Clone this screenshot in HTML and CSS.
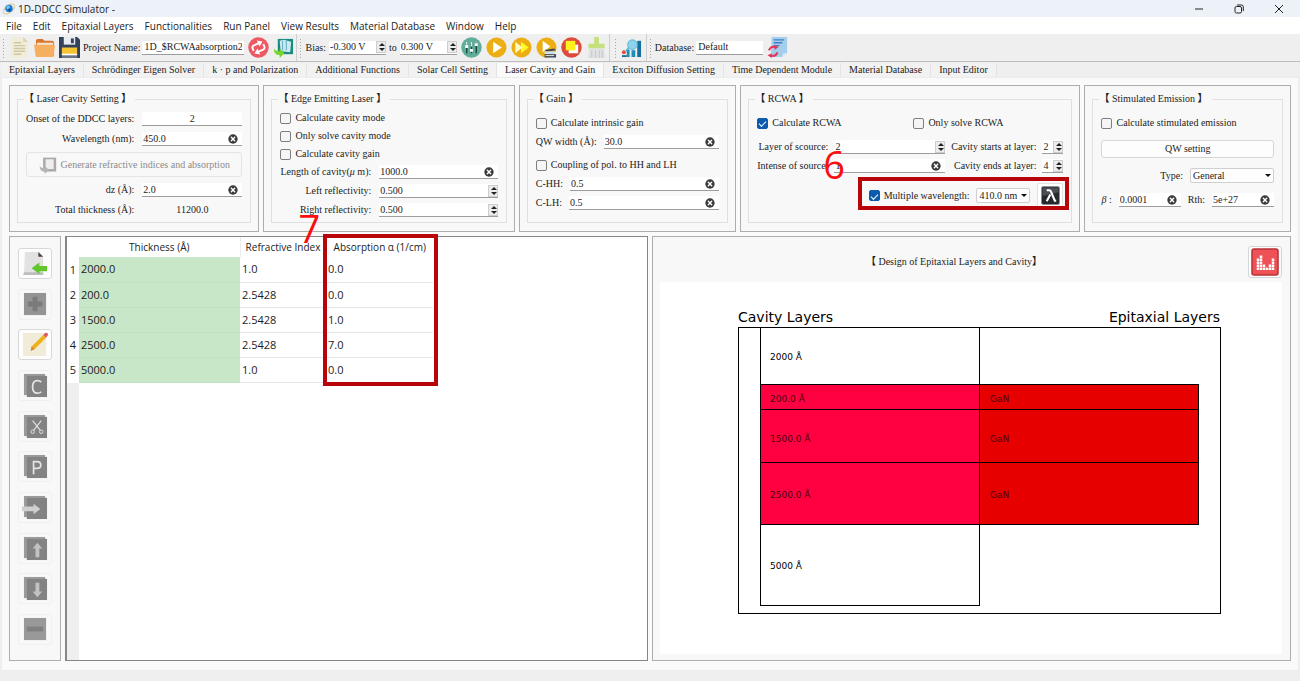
FILE: index.html
```html
<!DOCTYPE html>
<html lang="en">
<head>
<meta charset="utf-8">
<meta name="viewport" content="width=device-width, initial-scale=1">
<title>1D-DDCC Simulator</title>
<link rel="stylesheet" href="styles.css">
</head>
<body>
<svg class="defs" aria-hidden="true">
  <symbol id="clear" viewBox="0 0 12 12"><circle cx="6" cy="6" r="5.6" fill="#3a3a3a"/><path d="M4 4l4 4M8 4l-4 4" stroke="#fff" stroke-width="1.7" stroke-linecap="round"/></symbol>
  <symbol id="stack" viewBox="0 0 26 26"><path d="M1 1h22v22H1z" fill="#9b9b9b"/><path d="M4 3h21v22H4z" fill="#838383"/></symbol>
  <symbol id="play" viewBox="0 0 22 22"><circle cx="11" cy="11" r="10.500" fill="#ecae12"/><path d="M7.500 5l9 6-9 6z" fill="#fff"/></symbol>
</svg>

<header class="titlebar">
  <svg class="app-icon" viewBox="0 0 16 16"><ellipse cx="8" cy="8" rx="7.600" ry="4" fill="none" stroke="#e0cf94" stroke-width="1.300" transform="rotate(-38 8 8)"/><circle cx="8" cy="7.500" r="4.300" fill="#1d7fd6"/><path d="M5 5c2-2 4-1 4 1s-3 3-4 1z" fill="#7cc4f5"/><circle cx="8.500" cy="9" r="1.500" fill="#0b4a9c"/></svg>
  <h1>1D-DDCC Simulator -</h1>
  <div class="window-controls">
    <button aria-label="Minimize"><svg viewBox="0 0 12 12"><path d="M2 6h8"/></svg></button>
    <button aria-label="Restore"><svg viewBox="0 0 12 12"><rect x="2" y="3.500" width="6.500" height="6.500" rx="1.500"/><path d="M4 2h4.500a1.800 1.800 0 0 1 1.800 1.800V8"/></svg></button>
    <button aria-label="Close"><svg viewBox="0 0 12 12"><path d="M2 2l8 8M10 2l-8 8"/></svg></button>
  </div>
</header>

<nav class="menubar">
  <a href="#">File</a><a href="#">Edit</a><a href="#">Epitaxial Layers</a><a href="#">Functionalities</a><a href="#">Run Panel</a><a href="#">View Results</a><a href="#">Material Database</a><a href="#">Window</a><a href="#">Help</a>
</nav>

<div class="toolbar">
  <div class="toolgroup files">
    <button aria-label="New"><svg viewBox="0 0 22 22"><path d="M2 0h13l5 5v17H2z" fill="#f1edda"/><path d="M15 0v5h5z" fill="#d9d3b4"/><path d="M5 6h8M5 9h12M5 12h12M5 15h12M5 18h8" stroke="#cfc8a2" stroke-width="1.500"/></svg></button>
    <button aria-label="Open"><svg viewBox="0 0 22 22"><path d="M2 4q0-2 2-2h5l2 2h8q2 0 2 2v14H2z" fill="#d9762c"/><path d="M3 6h17v4H3z" fill="#f3e3cf"/><path d="M0 8h20q2 0 1.800 2L20.500 21H2z" fill="#f6ae60"/></svg></button>
    <button aria-label="Save"><svg viewBox="0 0 22 22"><path d="M0 0h19l3 3v19H0z" fill="#33425a"/><path d="M5 0h12v8H5z" fill="#e8ebef"/><path d="M12.500 1.500h3v5h-3z" fill="#33425a"/><path d="M3 11h16v8H3z" fill="#f6c432"/><path d="M3 17.500h16v2H3z" fill="#fff"/><path d="M3 19.500h16V22H3z" fill="#6b7484"/></svg></button>
    <label for="project">Project Name:</label>
    <input class="line project" id="project" value="1D_$RCWAabsorption2">
    <button aria-label="Reload project"><svg viewBox="0 0 22 22"><circle cx="11" cy="11" r="10.700" fill="#ee5a63"/><path d="M5 12V9.500Q5 7 7.500 7h6M17 10v2.500Q17 15 14.500 15h-6" fill="none" stroke="#fff" stroke-width="2" transform="rotate(-25 11 11)"/><path d="M12.500 3.500l5 3.500-5 3.500zM9.500 11.500l-5 3.500 5 3.500z" fill="#fff" transform="rotate(-25 11 11)"/></svg></button>
    <button aria-label="Import project"><svg viewBox="0 0 22 22"><path d="M5 2h16v16H5z" fill="#178c7c"/><path d="M7 4l4-1 8 2-1 11-10-1z" fill="#cdeaf2"/><path d="M10 4v10M14 4v10" stroke="#6ab2c4" stroke-width="1.200"/><path d="M1 11q0 4 6 4v-3l5 5-5 5v-3Q0 19 1 11z" fill="#79d62e"/></svg></button>
  </div>
  <div class="toolgroup run">
    <label for="bias-from">Bias:</label>
    <span class="field volt"><input id="bias-from" value="-0.300 V"><span class="spin"><button aria-label="Up"></button><button aria-label="Down"></button></span></span>
    <label for="bias-to">to</label>
    <span class="field volt"><input id="bias-to" value="0.300 V"><span class="spin"><button aria-label="Up"></button><button aria-label="Down"></button></span></span>
    <button aria-label="Parameters"><svg viewBox="0 0 22 22"><circle cx="11" cy="11" r="10.700" fill="#5fae9c"/><path d="M6 5v12M11 5v12M16 5v12" stroke="#22463f" stroke-width="1.500"/><path d="M4.500 10h3M9.500 14h3M14.500 8h3" stroke="#fff" stroke-width="3"/><path d="M6 5v3M11 5v5M16 5v1" stroke="#d8efe9" stroke-width="1.500"/></svg></button>
    <button aria-label="Run"><svg><use href="#play"/></svg></button>
    <button aria-label="Run all"><svg viewBox="0 0 22 22"><circle cx="11" cy="11" r="10.500" fill="#ecae12"/><path d="M10.500 5l8 6-8 6z" fill="#fffb28"/><path d="M4.500 5l7.500 6-7.500 6z" fill="#fffbc0"/></svg></button>
    <button aria-label="Run in background"><svg viewBox="0 0 22 22"><circle cx="11" cy="11" r="10.500" fill="#ecae12"/><path d="M7 4l8 6-8 6z" fill="#fff"/><path d="M9 13.500l10-1.500 2 2-10 1.500z" fill="#3b4654"/><path d="M9 15h11v3H9z" fill="#cfe0ea"/><path d="M9 18h12v3.500H9z" fill="#3b4654"/><path d="M10 19.500h9" stroke="#eee"/></svg></button>
    <button aria-label="Stop"><svg viewBox="0 0 22 22"><circle cx="11" cy="11" r="10.700" fill="#dc4b3e"/><path d="M8 8h10v9H8z" fill="#fff"/><path d="M5 4h10v10H5z" fill="#fff21c"/></svg></button>
    <button aria-label="Clean"><svg viewBox="0 0 22 22"><path d="M8.500 0h5v7h6v5h-17V7h6z" fill="#c6e07f"/><path d="M3.500 12h15.500l1 10H2z" fill="#dfe2e4"/><path d="M6 14v8M10 14v8M14 14v8M17 14v8" stroke="#c2c6ca"/></svg></button>
  </div>
  <div class="toolgroup plot">
    <button aria-label="Plot"><svg viewBox="0 0 22 22"><path d="M6 13h3v8H6zM11 14h4v7h-4z" fill="#1d8fb8"/><path d="M17 4h4v17h-4z" fill="#176f9c"/><circle cx="12" cy="8" r="5" fill="#8ed4ee" stroke="#52b2d8"/><path d="M8 11l-3 4" stroke="#52b2d8" stroke-width="1.500"/><circle cx="3" cy="16" r="2" fill="#e04b3a"/><path d="M1 19h5v2H1z" fill="#176f9c"/></svg></button>
  </div>
  <div class="toolgroup database">
    <label for="database">Database:</label>
    <input class="line db" id="database" value="Default">
    <button aria-label="Reload database"><svg viewBox="0 0 22 22"><path d="M5 0h16v17l-5 4H4z" fill="#a5cdec"/><path d="M16 21l1-4h4z" fill="#dcecf8"/><path d="M7 3h11M7 6h9M7 9h6" stroke="#3f81c2" stroke-width="1.500"/><path d="M2 14q2-5 7-3.500M11 16q-2 5-7 3.500" fill="none" stroke="#e2365a" stroke-width="2"/><path d="M8 8l4 2.500-4 3zM5 17l-4.500 2 4.500 3z" fill="#e2365a"/></svg></button>
  </div>
</div>

<div class="tabs" role="tablist">
  <button role="tab">Epitaxial Layers</button><button role="tab">Schrödinger Eigen Solver</button><button role="tab">k · p and Polarization</button><button role="tab">Additional Functions</button><button role="tab">Solar Cell Setting</button><button role="tab" aria-selected="true">Laser Cavity and Gain</button><button role="tab">Exciton Diffusion Setting</button><button role="tab">Time Dependent Module</button><button role="tab">Material Database</button><button role="tab">Input Editor</button>
</div>

<main class="page">
  <div class="settings">
    <section class="panel">
      <fieldset>
        <legend><b>【</b> Laser Cavity Setting <b>】</b></legend>
        <div class="form tight">
          <label for="onset">Onset of the DDCC layers:</label>
          <input class="line centered" id="onset" value="2">
          <label for="wave">Wavelength (nm):</label>
          <span class="field"><input id="wave" value="450.0"><button class="clear" aria-label="Clear"><svg><use href="#clear"/></svg></button></span>
          <button class="generate" disabled><svg viewBox="0 0 22 22"><path d="M5 2h16v17H5z" fill="#a9a9a9"/><path d="M8 4h10v12H8z" fill="#ededed"/><path d="M1 11q0 4 6 4v-3l5 5-5 5v-3Q0 19 1 11z" fill="#b4b4b4"/></svg>Generate refractive indices and absorption</button>
          <label for="dz">dz (Å):</label>
          <span class="field"><input id="dz" value="2.0"><button class="clear" aria-label="Clear"><svg><use href="#clear"/></svg></button></span>
          <span>Total thickness (Å):</span>
          <output>11200.0</output>
        </div>
      </fieldset>
    </section>

    <section class="panel">
      <fieldset>
        <legend><b>【</b> Edge Emitting Laser <b>】</b></legend>
        <div class="stack laser">
          <label class="check"><input type="checkbox">Calculate cavity mode</label>
          <label class="check"><input type="checkbox">Only solve cavity mode</label>
          <label class="check"><input type="checkbox">Calculate cavity gain</label>
          <div class="form">
            <label for="length">Length of cavity(<i>μ</i> m):</label>
            <span class="field"><input id="length" value="1000.0"><button class="clear" aria-label="Clear"><svg><use href="#clear"/></svg></button></span>
            <label for="left">Left reflectivity:</label>
            <span class="field"><input id="left" value="0.500"><span class="spin"><button aria-label="Up"></button><button aria-label="Down"></button></span></span>
            <label for="right">Right reflectivity:</label>
            <span class="field"><input id="right" value="0.500"><span class="spin"><button aria-label="Up"></button><button aria-label="Down"></button></span></span>
          </div>
        </div>
      </fieldset>
      <span class="step step-seven">7</span>
    </section>

    <section class="panel">
      <fieldset>
        <legend><b>【</b> Gain <b>】</b></legend>
        <div class="stack">
          <label class="check"><input type="checkbox">Calculate intrinsic gain</label>
          <div class="row"><label for="qw">QW width (Å):</label><span class="field"><input id="qw" value="30.0"><button class="clear" aria-label="Clear"><svg><use href="#clear"/></svg></button></span></div>
          <label class="check spaced"><input type="checkbox">Coupling of pol. to HH and LH</label>
          <div class="row"><label for="chh">C-HH:</label><span class="field"><input id="chh" value="0.5"><button class="clear" aria-label="Clear"><svg><use href="#clear"/></svg></button></span></div>
          <div class="row"><label for="clh">C-LH:</label><span class="field"><input id="clh" value="0.5"><button class="clear" aria-label="Clear"><svg><use href="#clear"/></svg></button></span></div>
        </div>
      </fieldset>
    </section>

    <section class="panel">
      <fieldset>
        <legend><b>【</b> RCWA <b>】</b></legend>
        <div class="stack rcwa">
          <div class="checks">
            <label class="check"><input type="checkbox" checked>Calculate RCWA</label>
            <label class="check"><input type="checkbox">Only solve RCWA</label>
          </div>
          <div class="form four">
            <label for="layer">Layer of scource:</label>
            <span class="field"><input id="layer" value="2"><span class="spin"><button aria-label="Up"></button><button aria-label="Down"></button></span></span>
            <label for="starts">Cavity starts at layer:</label>
            <span class="field"><input id="starts" value="2"><span class="spin"><button aria-label="Up"></button><button aria-label="Down"></button></span></span>
            <label for="intense">Intense of source:</label>
            <span class="field"><input id="intense" value="1"><button class="clear" aria-label="Clear"><svg><use href="#clear"/></svg></button></span>
            <label for="ends">Cavity ends at layer:</label>
            <span class="field"><input id="ends" value="4"><span class="spin"><button aria-label="Up"></button><button aria-label="Down"></button></span></span>
          </div>
          <div class="multi">
            <label class="check"><input type="checkbox" checked>Multiple wavelength:</label>
            <span class="select"><select aria-label="Wavelength"><option>410.0 nm</option></select></span>
            <button class="lambda" aria-label="Edit wavelengths"><svg viewBox="0 0 20 20"><rect x=".5" y=".5" width="19" height="19" rx="2" fill="#26292e" stroke="#8d9196"/><path d="M1.500 1.500h17v5l-17 4z" fill="#4a4e55"/><path d="M6 4.500h2.500q1.500 0 2 1.500l4 9.500h1.500M9.800 9L6 16" fill="none" stroke="#fff" stroke-width="2.200"/></svg></button>
            <span class="mark mark-multi"></span>
          </div>
        </div>
      </fieldset>
      <span class="step step-six">6</span>
    </section>

    <section class="panel">
      <fieldset>
        <legend><b>【</b> Stimulated Emission <b>】</b></legend>
        <div class="stack emission">
          <label class="check"><input type="checkbox">Calculate stimulated emission</label>
          <button class="plain">QW setting</button>
          <div class="row end"><label for="type">Type:</label><span class="select wide"><select id="type"><option>General</option></select></span></div>
          <div class="row">
            <label for="beta"><i>β</i> :</label><span class="field"><input id="beta" value="0.0001"><button class="clear" aria-label="Clear"><svg><use href="#clear"/></svg></button></span>
            <label for="rth">Rth:</label><span class="field"><input id="rth" value="5e+27"><button class="clear" aria-label="Clear"><svg><use href="#clear"/></svg></button></span>
          </div>
        </div>
      </fieldset>
    </section>
  </div>

  <div class="workspace">
    <div class="panel sidebar">
      <button class="on" aria-label="Load layers"><svg viewBox="0 0 26 26"><path d="M2 1h14l5 5v19H1z" fill="#e2e2e2"/><path d="M1 22h20v3H0z" fill="#bdbdbd"/><path d="M16 1v5h5z" fill="#444"/><path d="M9 18l8-6v3.500h8v5.500h-8V24z" fill="#62c52a"/></svg></button>
      <button aria-label="Add"><svg viewBox="0 0 26 26"><path d="M1 1h23v23H1z" fill="#949494"/><path d="M10 5h5v5h5v5h-5v5h-5v-5H5v-5h5z" fill="#7b7b7b"/></svg></button>
      <button class="on" aria-label="Edit"><svg viewBox="0 0 26 26"><path d="M0 1h24v24H0z" fill="#f1ecd8"/><path d="M9 15L21 3l3 3-12 12-4 1.500z" fill="#eeb21d"/><path d="M21 3l2-2q3-1 3 2l-2 3z" fill="#d95b5b"/><path d="M9 15l3 3-4 1.500z" fill="#c98a40"/></svg></button>
      <button aria-label="Copy"><svg viewBox="0 0 26 26"><use href="#stack"/><path d="M19 9.500q-1.500-1.500-4-1.500-5 0-5 6.500t5 6.500q2.500 0 4-1.500" fill="none" stroke="#e4e4e4" stroke-width="1.800"/></svg></button>
      <button aria-label="Cut"><svg viewBox="0 0 26 26"><use href="#stack"/><path d="M10 7l8 10M19 7l-8 10" stroke="#ddd" stroke-width="1.300"/><circle cx="10" cy="18.500" r="1.800" fill="none" stroke="#ddd"/><circle cx="19" cy="18.500" r="1.800" fill="none" stroke="#ddd"/></svg></button>
      <button aria-label="Paste"><svg viewBox="0 0 26 26"><use href="#stack"/><path d="M11 21V8h3.500q4 0 4 3.500t-4 3.500H11" fill="none" stroke="#e4e4e4" stroke-width="1.800"/></svg></button>
      <button aria-label="Insert"><svg viewBox="0 0 26 26"><use href="#stack"/><path d="M-1 12h12V9l7 5.500-7 5.500v-3H-1z" fill="#cfcfcf"/></svg></button>
      <button aria-label="Move up"><svg viewBox="0 0 26 26"><use href="#stack"/><path d="M15 7l5 6h-3v9h-4v-9h-3z" fill="#c2c2c2"/></svg></button>
      <button aria-label="Move down"><svg viewBox="0 0 26 26"><use href="#stack"/><path d="M15 22l5-6h-3V7h-4v9h-3z" fill="#c2c2c2"/></svg></button>
      <button aria-label="Remove"><svg viewBox="0 0 26 26"><path d="M1 1h23v23H1z" fill="#999"/><path d="M4 10h17v5H4z" fill="#808080"/></svg></button>
    </div>

    <div class="layers">
      <table>
        <thead><tr><td></td><th scope="col">Thickness (Å)</th><th scope="col">Refractive Index</th><th scope="col">Absorption α (1/cm)</th></tr></thead>
        <tbody>
          <tr><th scope="row">1</th><td>2000.0</td><td>1.0</td><td>0.0</td></tr>
          <tr><th scope="row">2</th><td>200.0</td><td>2.5428</td><td>0.0</td></tr>
          <tr><th scope="row">3</th><td>1500.0</td><td>2.5428</td><td>1.0</td></tr>
          <tr><th scope="row">4</th><td>2500.0</td><td>2.5428</td><td>7.0</td></tr>
          <tr><th scope="row">5</th><td>5000.0</td><td>1.0</td><td>0.0</td></tr>
        </tbody>
      </table>
      <div class="gutter"></div>
      <span class="mark mark-absorption"></span>
    </div>

    <section class="panel design">
      <div class="design-head">
        <h2><b>【</b> Design of Epitaxial Layers and Cavity<b>】</b></h2>
        <button aria-label="Show chart"><svg viewBox="0 0 28 28"><rect x="1" y="1" width="26" height="26" rx="2" fill="#ee5257" stroke="#b93136" stroke-width="1.500"/><g fill="none" stroke="#fff" stroke-width="2.500" stroke-dasharray="2.400 .6"><path d="M7 22V10"/><path d="M10 22V7"/><path d="M13 22v-6"/><path d="M16 22v-3"/><path d="M19 22v-6"/><path d="M22 22V10"/></g></svg></button>
      </div>
      <svg class="chart" viewBox="0 0 622 372" role="img" aria-label="Cavity and epitaxial layers">
        <g class="titles"><text x="78" y="40">Cavity Layers</text><text x="560" y="40" text-anchor="end">Epitaxial Layers</text></g>
        <g stroke="#000" fill="none">
          <rect x="78.500" y="45.500" width="482" height="286"/>
          <rect x="100.500" y="45.500" width="219" height="57"/>
          <rect x="100.500" y="102.500" width="219" height="25" fill="#ff0040"/>
          <rect x="100.500" y="127.500" width="219" height="53" fill="#ff0040"/>
          <rect x="100.500" y="180.500" width="219" height="62" fill="#ff0040"/>
          <rect x="100.500" y="242.500" width="219" height="81"/>
          <rect x="319.500" y="102.500" width="219" height="25" fill="#e60000"/>
          <rect x="319.500" y="127.500" width="219" height="53" fill="#e60000"/>
          <rect x="319.500" y="180.500" width="219" height="62" fill="#e60000"/>
        </g>
        <g class="names">
          <text x="110" y="78">2000 Å</text><text x="110" y="287">5000 Å</text>
          <g class="dim"><text x="110" y="120">200.0 Å</text><text x="110" y="160">1500.0 Å</text><text x="110" y="216">2500.0 Å</text>
          <text x="330" y="120">GaN</text><text x="330" y="160">GaN</text><text x="330" y="216">GaN</text></g>
        </g>
      </svg>
    </section>
  </div>
</main>
<footer class="statusbar"></footer>
</body>
</html>
```
FILE: styles.css
```css
* { box-sizing: border-box; }

body {
  margin: 0;
  min-height: 100vh;
  display: flex;
  flex-direction: column;
  background: #efefef;
  color: #1c1c1c;
  font: 10px/14px "Liberation Serif", "Noto Sans CJK TC", serif;
}

button, input, select, output { font: inherit; color: inherit; margin: 0; padding: 0; }
button { background: none; border: 0; display: flex; align-items: center; justify-content: center; }
input { border: 0; background: none; min-width: 0; outline: 0; }
label, legend, h2 { white-space: nowrap; }
.defs { display: none; }

/* title bar and menu */
.titlebar {
  display: flex;
  align-items: center;
  height: 17px;
  padding: 0 2px;
  gap: 2px;
  background: #edf2f9;
  font-family: "Open Sans", sans-serif;
}
.app-icon { width: 14px; height: 14px; }
.titlebar h1 { flex: 1; margin: 0; font-size: 10px; font-weight: 400; }
.window-controls { display: flex; gap: 28px; padding-right: 13px; }
.window-controls svg { display: block; width: 12px; height: 12px; fill: none; stroke: #222; }

.menubar {
  display: flex;
  gap: 11px;
  height: 17px;
  padding: 1px 6px 0;
  background: #fff;
  font-family: "Open Sans", sans-serif;
  line-height: 16px;
}
.menubar a { color: #1c1c1c; text-decoration: none; }

/* toolbar */
.toolbar {
  display: flex;
  height: 28px;
  padding-left: 2px;
  border-bottom: 1px solid #bdbdbd;
}
.toolgroup {
  display: flex;
  align-items: center;
  gap: 4px;
  padding: 0 2px 0 2px;
  border-left: 1px solid #cfcfcf;
}
.toolgroup:first-child { border-left: 0; padding-left: 0; }
.toolgroup::before {
  content: "";
  width: 3px;
  height: 20px;
  background: radial-gradient(circle, #a5a5a5 1px, transparent 1px) 0 0 / 3px 3px;
}
.toolgroup svg { display: block; width: 21px; height: 21px; }
.toolgroup label { margin: 0 -1px; }
.files label { margin-right: -2px; }
.database label { margin-right: -2px; }
.plot { padding: 0 4px; }
.line { height: 14px; padding: 0 2px; background: #fff; border-bottom: 1px solid #9d9d9d; }
.project { width: 102px; }
.db { width: 67px; }
.volt { width: 57px; }

/* fields */
.field {
  display: flex;
  align-items: center;
  height: 14px;
  min-width: 0;
  background: #fff;
  border-bottom: 1px solid #9d9d9d;
}
.field input { flex: 1; width: 0; padding-left: 1px; }
.clear { margin-right: 4px; }
.clear svg { display: block; width: 10px; height: 10px; }
.spin {
  display: flex;
  flex-direction: column;
  justify-content: center;
  gap: 2px;
  width: 10px;
  height: 12px;
  padding: 0 2px;
  background: #ececec;
  border: 1px solid #cdcdcd;
}
.spin button { border: 3px solid transparent; border-top: 0; border-bottom: 3px solid #222; }
.spin button + button { border-bottom: 0; border-top: 3px solid #222; }
.centered { text-align: center; }

.check { display: flex; align-items: center; gap: 4px; height: 14px; }
.check input {
  appearance: none;
  display: flex;
  align-items: center;
  justify-content: center;
  width: 11px;
  height: 11px;
  border: 1px solid #7f7f7f;
  border-radius: 2px;
  background: #f5f5f5;
}
.check input:checked { background: #0b5cad; border-color: #0b5cad; }
.check input:checked::before {
  content: "";
  width: 6px;
  height: 3px;
  border: solid #fff;
  border-width: 0 0 1px 1px;
  transform: rotate(-45deg);
}

.select { position: relative; width: 54px; }
.select.wide { width: 84px; }
.select select {
  display: block;
  width: 100%;
  height: 15px;
  padding-left: 2px;
  appearance: none;
  background: #fdfdfd;
  border: 1px solid #cfcfcf;
  border-radius: 2px;
}
.select::after {
  content: "";
  position: absolute;
  right: 3px;
  top: 6px;
  border: 3px solid transparent;
  border-top-color: #111;
  border-bottom: 0;
}

/* tabs */
.tabs { display: flex; height: 15px; padding: 1px 0 0 1px; }
.tabs button {
  padding: 0 8px;
  background: #f2f2f2;
  border-right: 1px solid #e4e4e4;
  white-space: nowrap;
}
.tabs button[aria-selected="true"] { background: #fafafa; }

/* page */
.page {
  flex: 1;
  display: flex;
  flex-direction: column;
  gap: 4px;
  margin: 0 1px;
  padding: 7px 7px 9px;
  background: #fafafb;
  border: 1px solid #ececec;
}
.statusbar { height: 10px; }

.settings {
  display: grid;
  grid-template-columns: 251fr 252fr 218fr 341fr 207fr;
  gap: 4px;
}
.panel {
  position: relative;
  min-width: 0;
  background: #f8f8f8;
  border: 1px solid #adadb0;
}
.settings .panel { display: flex; padding: 6px 7px 8px; }
fieldset {
  flex: 1;
  min-width: 0;
  margin: 0;
  padding: 0 8px 5px;
  border: 1px solid #e0e0e0;
}
legend { margin-left: -2px; padding: 0 4px 0 0; }

.form {
  display: grid;
  grid-template-columns: max-content 1fr;
  align-items: center;
  gap: 5px 8px;
  text-align: right;
}
.form.tight { row-gap: 6px; padding-top: 6px; }
.form input { text-align: left; }
.form input.centered { width: 100%; text-align: center; }
.form output { text-align: center; }
.form.four { grid-template-columns: max-content 1fr max-content 21px; column-gap: 6px; }
.generate {
  grid-column: 1 / -1;
  height: 25px;
  gap: 4px;
  border: 1px solid #e4e4e4;
  border-radius: 3px;
  color: #8c8c8c;
  white-space: nowrap;
}
.generate svg { width: 18px; height: 18px; }

.stack { display: flex; flex-direction: column; gap: 5px; padding-top: 10px; }
.stack.laser { gap: 4px; padding-top: 5px; }
.stack .spaced { margin-top: 4px; }
.row { display: flex; align-items: center; gap: 7px; }
.row .field { flex: 1; }
.row.end { justify-content: flex-end; }

.stack.rcwa { gap: 10px; }
.checks { display: grid; grid-template-columns: 1fr 1fr; column-gap: 6px; }
.multi { position: relative; display: flex; align-items: center; align-self: flex-end; gap: 7px; }
.lambda { width: 26px; height: 25px; background: #fff; border: 1px solid #e2e2e2; border-radius: 2px; }
.lambda svg { width: 19px; height: 19px; }

.stack.emission { gap: 10px; }
.plain { height: 18px; background: #fdfdfd; border: 1px solid #d6d6d6; border-radius: 3px; }

/* red callouts lying over the form */
.mark { position: absolute; border: 4px solid #b80509; pointer-events: none; }
.mark-multi { inset: -6px -6px -2px -11px; }
.mark-absorption { left: 256px; top: -3px; width: 115px; height: 152px; }
.step {
  position: absolute;
  z-index: 1;
  color: #fb0d10;
  font: 38px/38px "Open Sans", sans-serif;
}
.step-six { left: 82px; top: 59px; }
.step-seven { left: 34px; top: 123px; }

/* workspace */
.workspace {
  flex: 1;
  display: grid;
  grid-template-columns: 52px 583fr 639fr;
  gap: 4px;
}
.sidebar {
  display: flex;
  flex-direction: column;
  align-items: center;
  justify-content: space-between;
  padding: 11px 0 15px;
}
.sidebar button {
  width: 34px;
  height: 31px;
  border: 1px solid #f0f0f0;
  border-radius: 3px;
}
.sidebar .on { background: #fdfdfd; border-color: #d8d8d8; }
.sidebar svg { width: 25px; height: 25px; overflow: visible; }

.layers {
  position: relative;
  display: flex;
  flex-direction: column;
  background: #fff;
  border: 1px solid #85858c;
  border-left-width: 2px;
  font-family: "Open Sans", sans-serif;
}
.layers table { width: 366px; table-layout: fixed; border-collapse: collapse; }
.layers td, .layers th { padding: 0 2px; font-weight: 400; text-align: left; }
.layers thead th { height: 20px; text-align: center; border-right: 1px solid #ececec; }
.layers thead th:last-child { border-right: 0; }
.layers thead td { width: 12px; }
.layers thead th:nth-child(2) { width: 161px; }
.layers thead th:nth-child(3) { width: 86px; }
.layers tbody { font-size: 11px; }
.layers tbody tr { height: 25px; }
.layers tbody th { padding: 0; text-align: center; }
.layers tbody td { border-bottom: 1px solid #e6e6e6; }
.layers tbody td:nth-child(2) { background: #c8e6c8; border-color: #c2e1c2; }
.gutter { flex: 1; width: 12px; background: #efefef; }

.design { display: flex; flex-direction: column; padding: 8px 8px 6px 7px; }
.design-head { display: flex; align-items: center; height: 37px; padding-bottom: 4px; }
.design-head h2 { flex: 1; margin: 0; font-size: 10px; font-weight: 400; text-align: center; }
.design-head button { width: 34px; height: 32px; background: #fdfdfd; border: 1px solid #d6d6d6; border-radius: 3px; }
.design-head svg { width: 28px; height: 28px; }
.chart { flex: 1; display: block; width: 100%; min-height: 0; background: #fff; font-family: "DejaVu Sans", sans-serif; }
.titles { font-size: 14px; }
.names { font-size: 9px; }
.dim { fill: #4d0010; }
```
